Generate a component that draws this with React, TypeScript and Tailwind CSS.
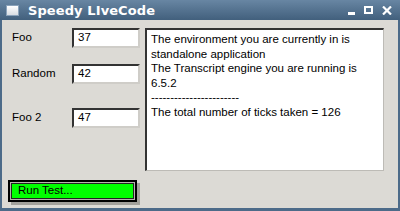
const lines = [
  "The environment you are currently in is",
  "standalone application",
  "The Transcript engine you are running is",
  "6.5.2",
  "-----------------------",
  "The total number of ticks taken = 126",
];

const fields = [
  { label: "Foo", value: "37", gap: "mt-[8px]" },
  { label: "Random", value: "42", gap: "mt-[16px]" },
  { label: "Foo 2", value: "47", gap: "mt-[24px]" },
];

export default function App() {
  return (
    <div className="w-[400px] h-[211px] flex flex-col bg-[#4d6b89] font-['Liberation_Sans',Arial,sans-serif] overflow-hidden">
      {/* Title bar */}
      <div className="h-[20px] shrink-0 flex items-center bg-gradient-to-b from-[#6886a3] to-[#42607d] px-[6px]">
        <div className="w-[13px] h-[11px] border border-[#8aa2ba] bg-gradient-to-b from-white to-[#d8dde3]" />
        <span className="ml-[9px] text-white font-bold text-[13px] font-['DejaVu_Sans',sans-serif] tracking-[0.1px] leading-none">
          Speedy LIveCode
        </span>
        <div className="ml-auto flex items-center gap-[9px] pr-[2px]">
          <div className="w-[7px] h-[3px] bg-white mt-[6px]" />
          <div className="w-[9px] h-[8px] border-2 border-white" />
          <svg width="10" height="9" viewBox="0 0 10 9">
            <path d="M1 0.5 L9 8.5 M9 0.5 L1 8.5" stroke="white" strokeWidth="2.2" />
          </svg>
        </div>
      </div>

      {/* Body */}
      <div className="flex-1 mx-[2px] mb-[3px] bg-[#dcdad5] flex flex-col">
        <div className="flex">
          <div className="flex flex-col w-[143px]">
            {fields.map((f) => (
              <div key={f.label} className={`flex items-center ${f.gap}`}>
                <span className="w-[70px] pl-[10px] text-[11.5px] text-black">{f.label}</span>
                <div className="w-[68px] h-[20px] bg-white border-2 border-t-[#333] border-l-[#333] border-r-[#cfcdc8] border-b-[#cfcdc8] flex items-center pl-[4px] text-[11.5px] text-black">
                  {f.value}
                </div>
              </div>
            ))}
          </div>
          <div className="mt-[8px] w-[239px] h-[143px] bg-white border-t-2 border-l-2 border-r border-b border-t-[#333] border-l-[#333] border-r-[#bdbbb6] border-b-[#bdbbb6] pl-[4px] pt-[2px]">
            {lines.map((l, i) => (
              <div key={i} className="text-[11.5px] leading-[14.5px] text-black whitespace-nowrap">
                {l}
              </div>
            ))}
          </div>
        </div>
        <div className="mt-[9px] ml-[6px]">
          <div className="w-[129px] h-[22px] border-2 border-black p-px bg-[#b5b3ae] shadow-[3px_3px_0_#a3a19c]">
            <div className="w-full h-full bg-[#00ff00] border border-[#222] flex items-center pl-[6px] text-[11.5px] text-black">
              Run Test...
            </div>
          </div>
        </div>
      </div>
    </div>
  );
}
